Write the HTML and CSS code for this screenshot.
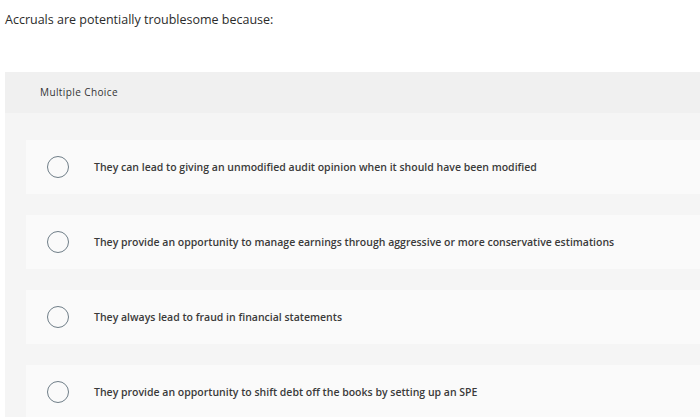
FILE: index.html
```html
<!DOCTYPE html>
<html lang="en">
<head>
  <meta charset="UTF-8">
  <title>Question</title>
  <link rel="stylesheet" href="styles.css">
</head>
<body>
  <p class="prompt">Accruals are potentially troublesome because:</p>

  <div class="question">
    <div class="qtype">Multiple Choice</div>
    <div class="choices">
      <label class="choice"><span class="radio"></span><span>They can lead to giving an unmodified audit opinion when it should have been modified</span></label>
      <label class="choice"><span class="radio"></span><span>They provide an opportunity to manage earnings through aggressive or more conservative estimations</span></label>
      <label class="choice"><span class="radio"></span><span>They always lead to fraud in financial statements</span></label>
      <label class="choice"><span class="radio"></span><span>They provide an opportunity to shift debt off the books by setting up an SPE</span></label>
    </div>
  </div>
</body>
</html>
```
FILE: styles.css
```css
html,body{margin:0;padding:0;background:#fff;}
body{font-family:"Open Sans","Lato",sans-serif;color:#333;overflow:hidden;}
.prompt{margin:0;padding:12px 0 0 5px;font-size:12.5px;line-height:16px;color:#2b2b2b;}
.question{margin:44px 0 0 5px;background:#f5f5f5;}
.qtype{height:41px;line-height:41px;padding-left:35px;background:#f0f0f0;font-size:10px;letter-spacing:.4px;color:#333;}
.choices{display:flex;flex-direction:column;gap:21px;padding:27px 0 0 21px;}
.choice{display:flex;align-items:center;height:54px;background:#fafafa;padding-left:21px;
        font-size:10.5px;font-weight:600;color:#3a3a3a;}
.radio{width:20px;height:20px;border:1.5px solid #6f7e88;border-radius:50%;margin-right:25px;flex:none;}
```
